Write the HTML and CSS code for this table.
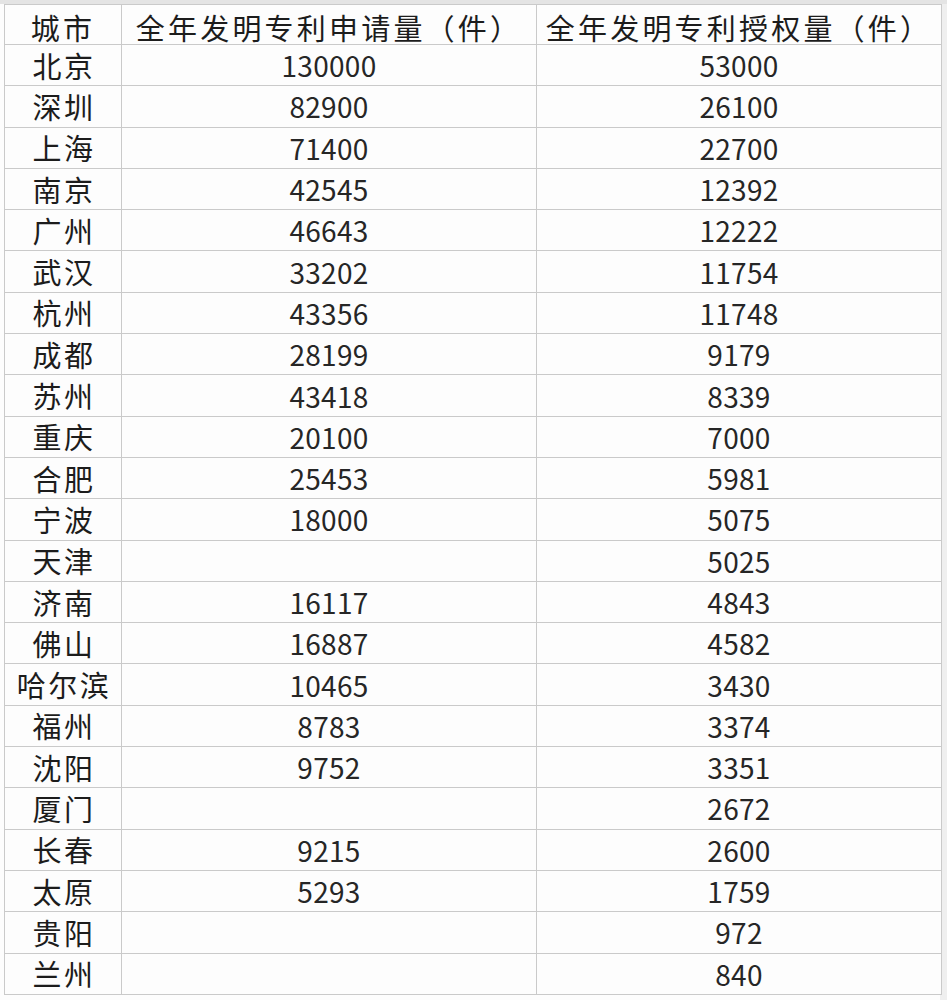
FILE: index.html
```html
<!DOCTYPE html>
<html lang="zh-CN">
<head>
<meta charset="utf-8">
<link rel="stylesheet" href="styles.css">
</head>
<body>
<div class="sheet">
<table class="grid">
<colgroup><col class="c1"><col class="c2"><col class="c3"></colgroup>
<thead>
<tr><th>城市</th><th>全年发明专利申请量（件）</th><th>全年发明专利授权量（件）</th></tr>
</thead>
<tbody>
<tr><td class="city">北京</td><td>130000</td><td>53000</td></tr>
<tr><td class="city">深圳</td><td>82900</td><td>26100</td></tr>
<tr><td class="city">上海</td><td>71400</td><td>22700</td></tr>
<tr><td class="city">南京</td><td>42545</td><td>12392</td></tr>
<tr><td class="city">广州</td><td>46643</td><td>12222</td></tr>
<tr><td class="city">武汉</td><td>33202</td><td>11754</td></tr>
<tr><td class="city">杭州</td><td>43356</td><td>11748</td></tr>
<tr><td class="city">成都</td><td>28199</td><td>9179</td></tr>
<tr><td class="city">苏州</td><td>43418</td><td>8339</td></tr>
<tr><td class="city">重庆</td><td>20100</td><td>7000</td></tr>
<tr><td class="city">合肥</td><td>25453</td><td>5981</td></tr>
<tr><td class="city">宁波</td><td>18000</td><td>5075</td></tr>
<tr><td class="city">天津</td><td></td><td>5025</td></tr>
<tr><td class="city">济南</td><td>16117</td><td>4843</td></tr>
<tr><td class="city">佛山</td><td>16887</td><td>4582</td></tr>
<tr><td class="city">哈尔滨</td><td>10465</td><td>3430</td></tr>
<tr><td class="city">福州</td><td>8783</td><td>3374</td></tr>
<tr><td class="city">沈阳</td><td>9752</td><td>3351</td></tr>
<tr><td class="city">厦门</td><td></td><td>2672</td></tr>
<tr><td class="city">长春</td><td>9215</td><td>2600</td></tr>
<tr><td class="city">太原</td><td>5293</td><td>1759</td></tr>
<tr><td class="city">贵阳</td><td></td><td>972</td></tr>
<tr><td class="city">兰州</td><td></td><td>840</td></tr>
</tbody>
</table>
</div>
</body>
</html>
```
FILE: styles.css
```css
html, body {
  margin: 0;
  padding: 0;
  background: #fdfdfd;
}
body {
  width: 947px;
  height: 1000px;
  overflow: hidden;
  font-family: "Noto Sans CJK SC", "Noto Sans", sans-serif;
  color: #222;
}
.sheet {
  background: linear-gradient(#e4e4e4, #e4e4e4) top left / 100% 4px no-repeat,
              linear-gradient(#efefef, #efefef) top right / 7px 100% no-repeat,
              #fdfdfd;
  padding: 4px 0 0 4px;
  height: 996px;
}
.grid {
  border-collapse: collapse;
  table-layout: fixed;
  width: 937px;
  background: #fdfdfd;
}
.c1 { width: 117px; }
.c2 { width: 415px; }
.c3 { width: 405px; }
.grid th,
.grid td {
  border: 1px solid #cacaca;
  padding: 0;
  text-align: center;
  vertical-align: middle;
  font-weight: 400;
  font-size: 28px;
  line-height: 1;
  white-space: nowrap;
}
.grid thead tr {
  height: 40px;
}
.grid th {
  font-size: 29px;
  letter-spacing: 3.2px;
  padding-top: 5px;
  color: #1c1c1c;
}
.grid tbody tr {
  height: 41.3px;
}
.grid td {
  letter-spacing: 0.3px;
  color: #262626;
}
.grid td.city {
  font-size: 29px;
  letter-spacing: 2.5px;
  padding-left: 2px;
  color: #1c1c1c;
}
```
